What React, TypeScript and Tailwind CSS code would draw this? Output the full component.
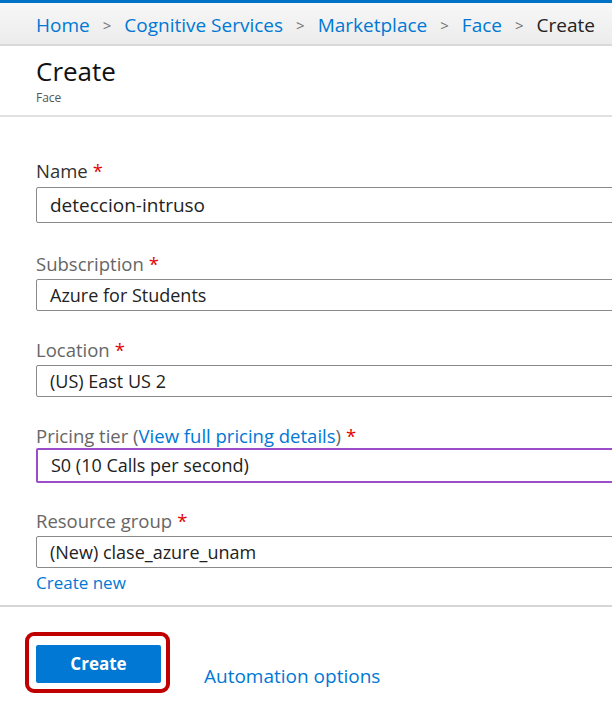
const font = { fontFamily: '"Segoe UI", "Open Sans", "Noto Sans", sans-serif' };

function Required() {
  return <span className="text-[#e50000] ml-[5px]">*</span>;
}

function Field({
  label,
  value,
  labelClass,
  boxClass,
}: {
  label: React.ReactNode;
  value: string;
  labelClass: string;
  boxClass: string;
}) {
  return (
    <div>
      <div className={`text-[18.5px] leading-[24px] ${labelClass}`}>
        {label}
        <Required />
      </div>
      <div className={`w-[620px] flex items-center pl-[13px] text-[#222222] rounded-l-[2px] ${boxClass}`}>{value}</div>
    </div>
  );
}

export default function App() {
  const crumbs = ['Home', 'Cognitive Services', 'Marketplace', 'Face'];

  return (
    <div className="w-[612px] h-[727px] bg-white overflow-hidden" style={font}>
      <div className="h-[3px] bg-[#0072c6]" />
      <div className="h-[43px] bg-gradient-to-b from-[#f7f7f7] to-[#ececec] border-b-2 border-[#d9d9d9] flex items-center pl-[36px] pt-[4px] whitespace-nowrap text-[19px]">
        {crumbs.map((c) => (
          <span key={c} className="flex items-center">
            <span className="text-[#0078d4]">{c}</span>
            <span className="text-[#737373] text-[15px] mx-[13px]">&gt;</span>
          </span>
        ))}
        <span className="text-[#222222]">Create</span>
      </div>

      <div className="pl-[36px] pt-[9px] pb-[8px] border-b-2 border-[#e1e1e1]">
        <div className="text-[26px] leading-[32px] text-[#111111]">Create</div>
        <div className="text-[12px] leading-[18px] text-[#555555] mt-[2px]">Face</div>
      </div>

      <div className="pl-[36px] pt-[42px] flex flex-col">
        <Field
          label="Name"
          value="deteccion-intruso"
          labelClass="text-[#323130]"
          boxClass="mt-[4px] h-[36px] border border-[#8a8a8a] text-[19px]"
        />
        <div className="mt-[29px]">
          <Field
            label="Subscription"
            value="Azure for Students"
            labelClass="text-[#666666]"
            boxClass="mt-[3px] h-[32px] border border-[#8a8a8a] text-[18px]"
          />
        </div>
        <div className="mt-[27px]">
          <Field
            label="Location"
            value="(US) East US 2"
            labelClass="text-[#666666]"
            boxClass="mt-[3px] h-[32px] border border-[#8a8a8a] text-[18px]"
          />
        </div>
        <div className="mt-[27px]">
          <Field
            label={
              <>
                Pricing tier (<span className="text-[#0078d4]">View full pricing details</span>)
              </>
            }
            value="S0 (10 Calls per second)"
            labelClass="text-[#666666]"
            boxClass="mt-[0px] h-[35px] border-2 border-[#9b4dca] text-[18px] pl-[12px]"
          />
        </div>
        <div className="mt-[26px]">
          <Field
            label="Resource group"
            value="(New) clase_azure_unam"
            labelClass="text-[#666666]"
            boxClass="mt-[3px] h-[32px] border border-[#8a8a8a] text-[18px]"
          />
          <div className="text-[17px] leading-[22px] text-[#0078d4] mt-[4px]">Create new</div>
        </div>
      </div>

      <div className="mt-[11px] border-t-2 border-[#d6d6d6]" />

      <div className="flex items-end pl-[25px] pt-[25px]">
        <div className="border-4 border-[#c00000] rounded-[9px] pt-[9px] pl-[7px] pb-[6px] pr-[5px]">
          <div className="w-[125px] h-[38px] bg-[#0078d4] rounded-[2px] flex items-center justify-center text-white font-bold text-[17px]">
            Create
          </div>
        </div>
        <div className="ml-[34px] mb-[3px] text-[19px] text-[#0078d4]">Automation options</div>
      </div>
    </div>
  );
}
